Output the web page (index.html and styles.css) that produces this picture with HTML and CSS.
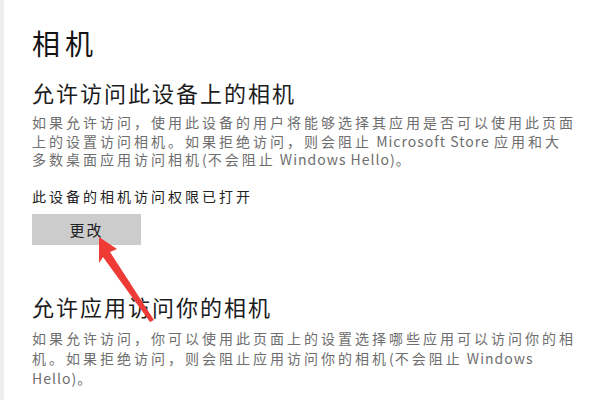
FILE: index.html
```html
<!DOCTYPE html>
<html lang="zh-CN">
<head>
<meta charset="utf-8">
<title>相机</title>
<link rel="stylesheet" href="styles.css">
</head>
<body>
<div class="page">
  <h1 class="title">相机</h1>
  <h2 class="heading">允许访问此设备上的相机</h2>
  <p class="desc">如果允许访问，使用此设备的用户将能够选择其应用是否可以使用此页面<br>上的设置访问相机。如果拒绝访问，则会阻止<span class="latin"> Microsoft Store </span>应用和大<br>多数桌面应用访问相机<span class="latin">(</span>不会阻止<span class="latin"> Windows Hello)</span>。</p>
  <p class="status">此设备的相机访问权限已打开</p>
  <button class="btn">更改</button>
  <h2 class="heading heading-2">允许应用访问你的相机</h2>
  <p class="desc desc-2">如果允许访问，你可以使用此页面上的设置选择哪些应用可以访问你的相<br>机。如果拒绝访问，则会阻止应用访问你的相机<span class="latin">(</span>不会阻止<span class="latin"> Windows</span><br><span class="latin">Hello)</span>。</p>
  <svg class="arrow" width="600" height="400" viewBox="0 0 600 400">
    <polygon points="99,237 117,249 110,252 154,320 150,322 103,257 99,263" fill="#ee3b36"/>
  </svg>
</div>
</body>
</html>
```
FILE: styles.css
```css
html, body {
  margin: 0;
  padding: 0;
  background: #ffffff;
}
body {
  font-family: "Noto Sans CJK SC", "Noto Sans", sans-serif;
  width: 600px;
  height: 400px;
  overflow: hidden;
}
.page {
  position: relative;
  box-sizing: border-box;
  width: 600px;
  height: 400px;
  border-left: 4px solid #eeeeee;
  padding: 25px 0 0 28px;
  display: flex;
  flex-direction: column;
  align-items: flex-start;
}
.title {
  margin: 0;
  font-size: 28px;
  line-height: 36px;
  font-weight: 400;
  letter-spacing: 5px;
  color: #141414;
}
.heading {
  margin: 17px 0 0;
  font-size: 22px;
  line-height: 28px;
  font-weight: 400;
  letter-spacing: 2px;
  color: #1c1c1c;
}
.desc {
  margin: 7px 0 0;
  font-size: 14px;
  line-height: 18.5px;
  letter-spacing: 3px;
  color: #6e6e6e;
  white-space: nowrap;
}
.latin {
  letter-spacing: 1px;
}
.status {
  margin: 16px 0 0;
  font-size: 14px;
  line-height: 22px;
  letter-spacing: 3px;
  color: #222222;
}
.btn {
  margin-top: 7px;
  width: 109px;
  height: 31px;
  border: none;
  background: #cccccc;
  font-family: inherit;
  font-size: 15px;
  letter-spacing: 2px;
  color: #222222;
  padding: 0;
}
.heading-2 {
  margin-top: 47px;
}
.desc-2 {
  margin-top: 8px;
  line-height: 20px;
}
.arrow {
  position: absolute;
  left: -4px;
  top: 0;
  pointer-events: none;
}
```
